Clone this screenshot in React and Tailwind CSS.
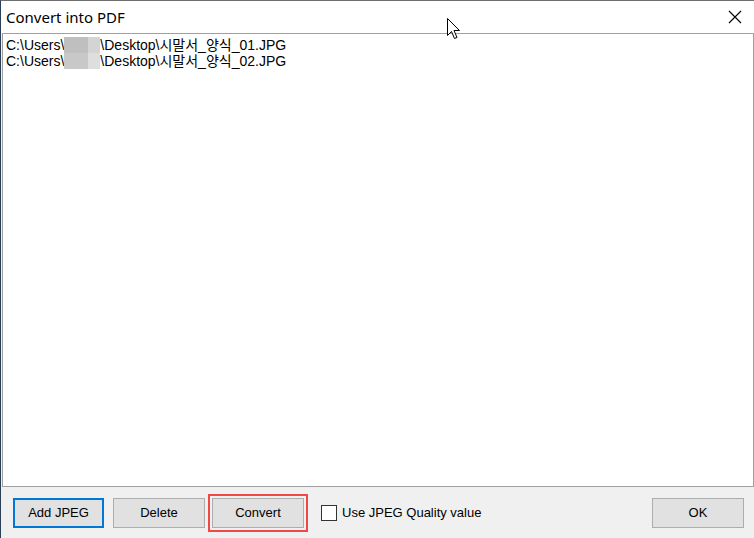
import React from 'react'

const files = ['시말서_양식_01.JPG', '시말서_양식_02.JPG']

// little stand-in for the Windows arrow pointer
function Pointer() {
  return (
    <svg
      className="absolute left-[446px] top-[17px]"
      width="14"
      height="23"
      viewBox="0 0 14 23"
    >
      <path
        d="M0.5 0.5 L0.5 17.5 L4.5 13.5 L7.5 20.5 L10 19.5 L7 12.5 L12.5 12.5 Z"
        fill="#fff"
        stroke="#000"
        strokeWidth="1"
        strokeLinejoin="miter"
      />
    </svg>
  )
}

function Button({ label, focused = false }) {
  return (
    <button
      className={
        focused
          ? 'h-[30px] w-[91px] bg-[#e1e1e1] border-2 border-[#0078d7] text-[13px] text-black'
          : 'h-[30px] w-[92px] bg-[#e1e1e1] border border-[#adadad] text-[13px] text-black'
      }
    >
      {label}
    </button>
  )
}

export default function App() {
  return (
    <div
      className="relative w-[754px] h-[538px] flex flex-col bg-[#f0f0f0] border-l border-t border-l-[#2b3f57] border-t-[#6e6e6e] overflow-hidden"
      style={{ fontFamily: '"Liberation Sans", "Noto Sans CJK KR", sans-serif' }}
    >
      {/* Title bar */}
      <div className="h-[32px] bg-white flex items-center justify-between pl-[5px] pr-[11px]">
        <span
          className="text-[15px] text-black"
          style={{ fontFamily: '"Noto Sans", "Liberation Sans", sans-serif' }}
        >
          Convert into PDF
        </span>
        <svg width="16" height="16" viewBox="0 0 16 16">
          <path d="M2 2 L14 14 M14 2 L2 14" stroke="#000" strokeWidth="1.1" />
        </svg>
      </div>

      {/* File list */}
      <div className="flex-1 bg-white border border-[#a0a0a0] ml-[1px] pt-[3px] pl-[3px]">
        {files.map((name, i) => (
          <div key={name} className="flex items-center h-[16px] text-[14px] leading-[16px] text-black">
            <span>C:\Users\</span>
            <span className="flex h-[16px] w-[36px]">
              <span className={i === 0 ? 'w-[24px] bg-[#bfbfbf]' : 'w-[24px] bg-[#c8c8c8]'} />
              <span className={i === 0 ? 'w-[12px] bg-[#d4d4d4]' : 'w-[12px] bg-[#dedede]'} />
            </span>
            <span>\Desktop\{name}</span>
          </div>
        ))}
      </div>

      {/* Bottom bar */}
      <div className="h-[51px] flex items-center pl-[12px] pr-[10px]">
        <Button label="Add JPEG" focused />
        <div className="ml-[9px]">
          <Button label="Delete" />
        </div>
        <div className="ml-[3px] border-2 border-[#f04848] p-[2px]">
          <Button label="Convert" />
        </div>
        <label className="ml-[13px] flex items-center gap-[5px] text-[13px] text-black">
          <span className="w-[16px] h-[16px] bg-white border border-[#333]" />
          Use JPEG Quality value
        </label>
        <div className="ml-auto">
          <Button label="OK" />
        </div>
      </div>

      <Pointer />
    </div>
  )
}
